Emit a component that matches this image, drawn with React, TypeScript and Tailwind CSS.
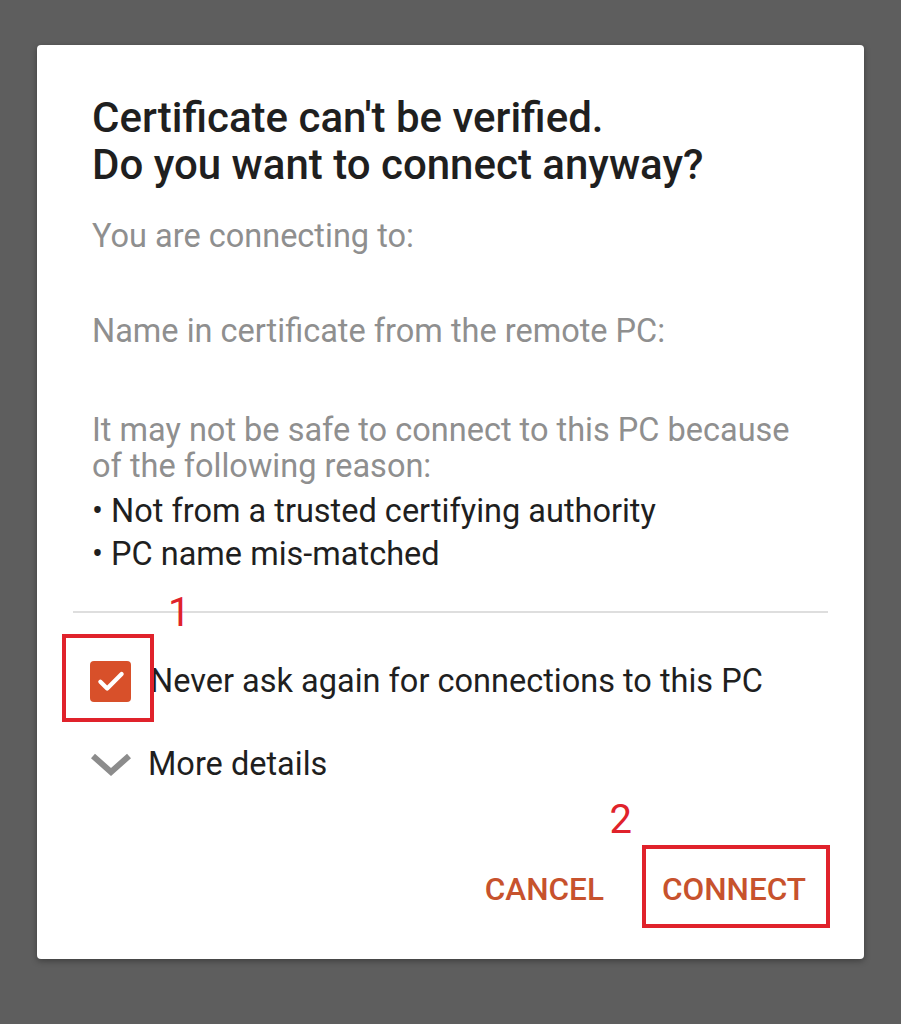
export default function App() {
    return (
        <div className="w-[901px] h-[1024px] bg-[#5e5e5e] pt-[45px] pl-[37px] font-['Roboto',sans-serif]">
            <div className="relative w-[827px] h-[914px] bg-white rounded-[4px] shadow-[0_2px_6px_rgba(0,0,0,0.35)]">
                <div className="px-[55px] pt-[49px]">
                    <h2 className="text-[42px] leading-[47px] font-medium text-[#1f1f1f] whitespace-nowrap">
                        Certificate can't be verified.
                        <br />
                        Do you want to connect anyway?
                    </h2>
                    <p className="mt-[30px] text-[32.5px] leading-[36px] text-[#8f8f8f]">
                        You are connecting to:
                    </p>
                    <p className="mt-[59px] text-[32.5px] leading-[36px] text-[#8f8f8f]">
                        Name in certificate from the remote PC:
                    </p>
                    <p className="mt-[63px] text-[32.5px] leading-[36px] text-[#8f8f8f] whitespace-nowrap">
                        It may not be safe to connect to this PC because
                        <br />
                        of the following reason:
                    </p>
                    <ul className="mt-[6px] text-[32.5px] leading-[43px] text-[#1f1f1f]">
                        <li>• Not from a trusted certifying authority</li>
                        <li>• PC name mis-matched</li>
                    </ul>
                </div>

                <div className="mx-[36px] mt-[35px] h-[2px] bg-[#dedede]" />

                <div className="relative flex items-center h-[66px] mt-[35px] pl-[53px]">
                    <div className="w-[41px] h-[41px] rounded-[4px] bg-[#d8502a] flex items-center justify-center">
                        <svg width="34" height="34" viewBox="0 0 24 24" fill="none" stroke="white" strokeWidth="3" strokeLinecap="round" strokeLinejoin="round">
                            <path d="M4.5 12.5l4.8 4.8L19.5 7" />
                        </svg>
                    </div>
                    <span className="ml-[19px] text-[32.5px] text-[#1f1f1f] whitespace-nowrap">
                        Never ask again for connections to this PC
                    </span>
                    {/* annotation 1 */}
                    <div className="absolute left-[25px] top-[-14px] w-[92px] h-[88px] border-[4px] border-[#e0222b]" />
                    <div className="absolute left-[131px] top-[-55px] text-[40px] leading-none text-[#e0222b]">1</div>
                </div>

                <div className="flex items-center mt-[30px] pl-[53px] h-[40px]">
                    <svg width="42" height="24" viewBox="0 0 42 24" fill="none" stroke="#8c8c8c" strokeWidth="6" strokeLinejoin="miter">
                        <path d="M3 4l18 16L39 4" />
                    </svg>
                    <span className="ml-[16px] text-[32.5px] text-[#1f1f1f]">More details</span>
                </div>

                <div className="relative flex justify-end items-center h-[40px] mt-[86px] pr-[58px] gap-[58px]">
                    <button className="text-[31.5px] leading-[40px] font-medium text-[#c7522d]">CANCEL</button>
                    <button className="text-[31.5px] leading-[40px] font-medium text-[#c7522d]">CONNECT</button>
                    {/* annotation 2 */}
                    <div className="absolute right-[34px] top-[-25px] w-[188px] h-[83px] border-[4px] border-[#e0222b]" />
                    <div className="absolute right-[232px] top-[-70px] text-[40px] leading-none text-[#e0222b]">2</div>
                </div>
            </div>
        </div>
    );
}
